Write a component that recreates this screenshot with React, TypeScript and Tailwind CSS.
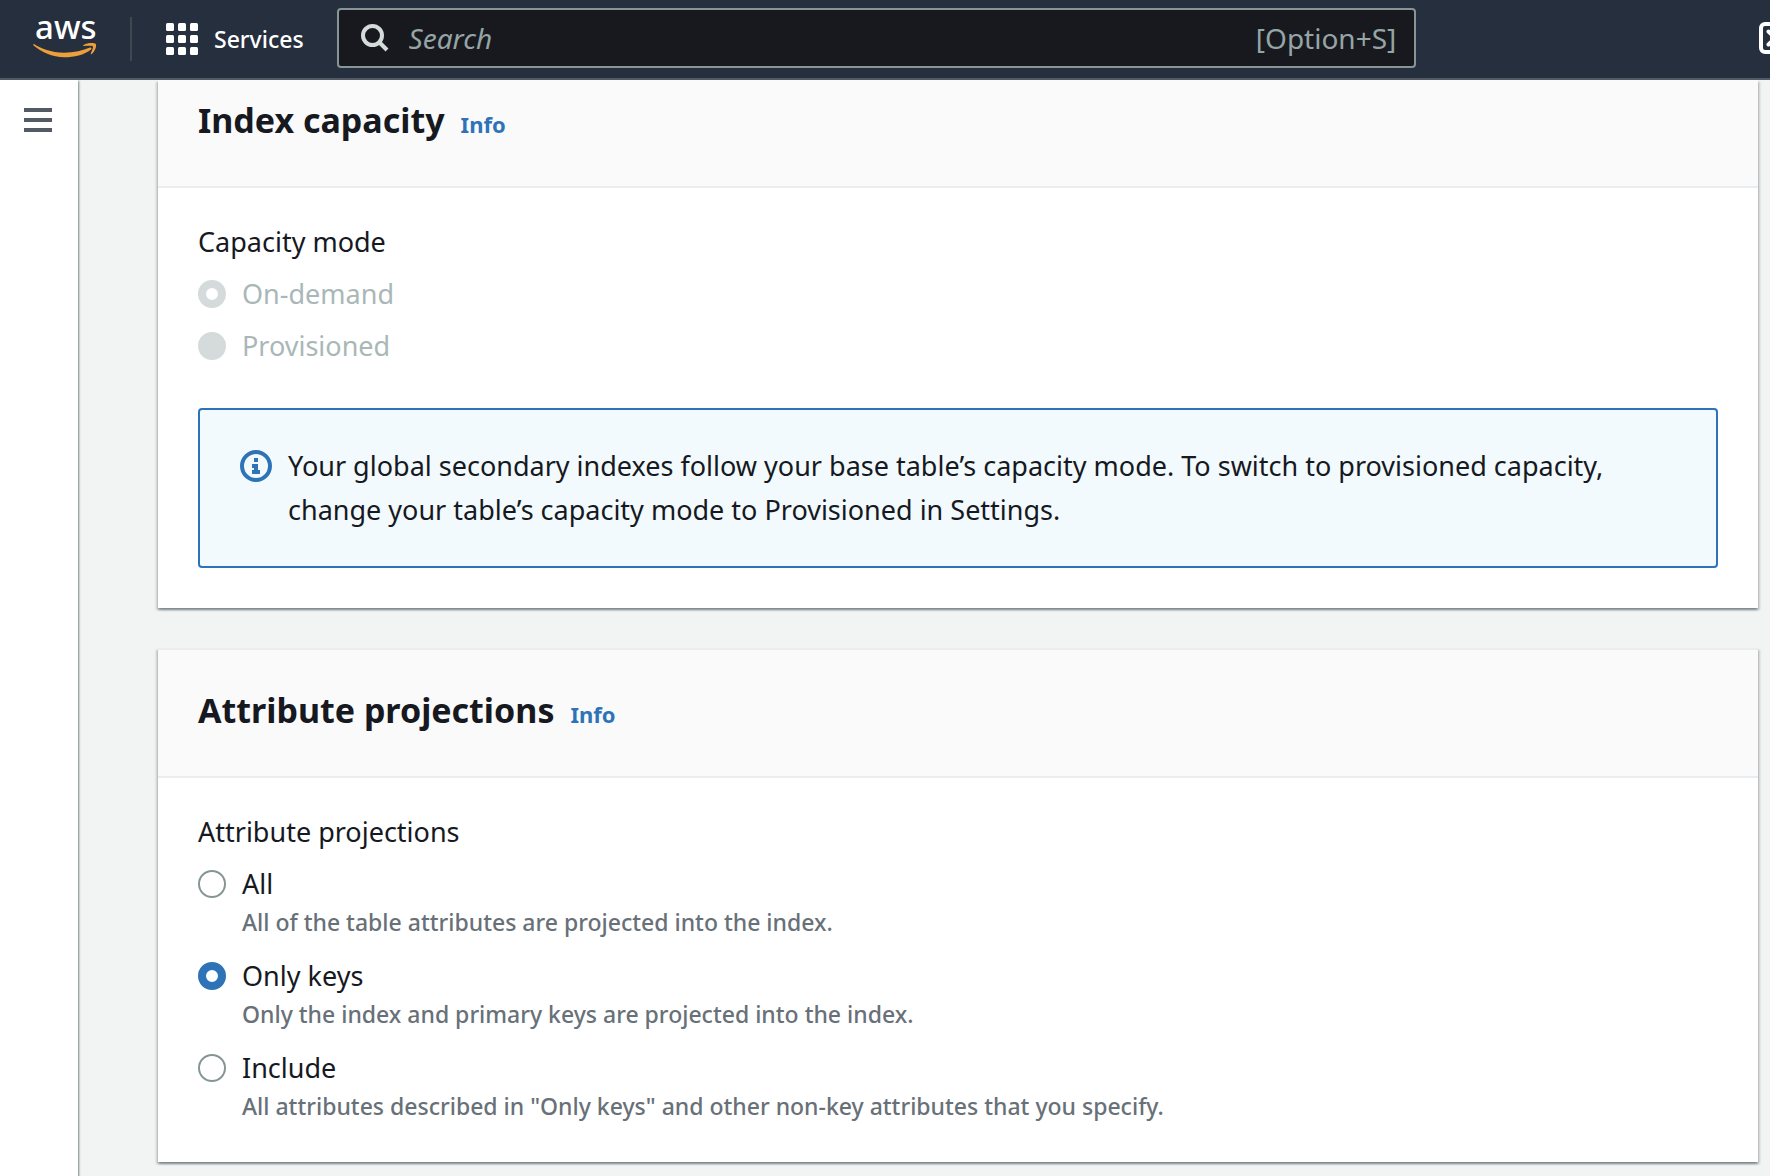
import { useState, type ReactNode } from "react";

function AwsLogo() {
  return (
    <svg viewBox="0 -14 64 78" className="h-[78px] w-16" role="img" aria-label="aws">
      <text x="2" y="25" fontSize="33" fontWeight="500" fill="#ffffff" fontFamily='"Noto Sans", sans-serif'>
        aws
      </text>
      <path
        d="M1 30C8 34.500 18 38.500 31 38.700C41 38.500 50 36.500 57 33.500C58.500 33 59 34.500 58 35.500C51 41 41 43.300 31.500 43.300C19.500 43 8 38 .600 31.500C0 30.800.300 29.800 1 30Z"
        fill="#ef9f3a"
      />
      <path
        d="M50.500 31.100C55 28.500 61 28.700 62.800 30C63.900 32 61.900 37.500 58.700 40C57.900 40.500 57.600 39.900 57.900 39.200C58.900 36.500 60.600 33.500 59.900 32.500C58.900 31.500 54 31.800 51 32.100C50.200 32.200 50 31.500 50.500 31.100Z"
        fill="#ef9f3a"
      />
    </svg>
  );
}

function GridIcon() {
  const cells = [0, 12, 24];
  return (
    <svg viewBox="0 0 32 32" className="size-8" fill="#ffffff" aria-hidden="true">
      {cells.map((y) => cells.map((x) => <rect key={`${x}-${y}`} x={x} y={y} width="8" height="8" rx="1.500" />))}
    </svg>
  );
}

function SearchIcon() {
  return (
    <svg viewBox="0 0 28 28" className="size-7 shrink-0" fill="none" stroke="#d5dbdb" strokeWidth="4" aria-hidden="true">
      <circle cx="11.500" cy="11.500" r="9.500" />
      <path d="M18 18L26 26" />
    </svg>
  );
}

function ShellIcon() {
  return (
    <svg viewBox="0 0 32 32" className="size-8" fill="none" stroke="#ffffff" strokeWidth="4" aria-hidden="true">
      <rect x="2" y="2" width="28" height="28" rx="4" />
      <path d="M9.500 9.500L16 16L9.500 22.500" strokeLinecap="round" />
    </svg>
  );
}

function InfoIcon() {
  return (
    <svg viewBox="0 0 32 32" className="size-8 shrink-0" fill="#2e73b8" aria-hidden="true">
      <circle cx="16" cy="16" r="14" fill="none" stroke="#2e73b8" strokeWidth="4" />
      <path d="M14 8h4v4h-4zM12 14h6v6h2v4h-8v-4h2v-2h-2z" />
    </svg>
  );
}

function Header() {
  return (
    <header className="flex h-20 items-center overflow-hidden border-b-2 border-[#545b64] bg-[#262f3e]">
      <a href="#home" className="ml-[33px] shrink-0">
        <AwsLogo />
      </a>
      <span className="ml-[33px] h-11 w-0.5 shrink-0 bg-[#414750]" />
      <button type="button" className="ml-[34px] flex shrink-0 items-center gap-4 text-[23px] font-medium text-white">
        <GridIcon />
        Services
      </button>
      <label className="mr-auto mb-0.5 ml-[33px] flex h-15 w-[61%] shrink-0 items-center gap-5 rounded-[4px] border-2 border-[#879596] bg-[#18191e] pr-[18px] pl-[22px]">
        <SearchIcon />
        <input
          type="search"
          placeholder="Search"
          aria-label="Search"
          className="min-w-0 flex-1 bg-transparent text-[28px] text-white italic outline-none placeholder:text-[#95a5a6]"
        />
        <span className="text-[28px] text-[#95a5a6]">[Option+S]</span>
      </label>
      <button type="button" aria-label="CloudShell" className="-mr-[21px] mb-0.5 shrink-0">
        <ShellIcon />
      </button>
    </header>
  );
}

function Panel({ title, scrolled, children }: { title: string; scrolled?: boolean; children: ReactNode }) {
  return (
    <section className="bg-white shadow-[0_2px_2px_0_rgba(0,28,36,0.3),2px_2px_2px_0_rgba(0,28,36,0.15),-2px_2px_2px_0_rgba(0,28,36,0.15)]">
      <div
        className={
          scrolled
            ? "flex items-baseline gap-4 border-b-2 border-[#eaeded] bg-[#fafafa] px-10 pt-4 pb-[42px]"
            : "flex items-baseline gap-4 border-y-2 border-[#eaeded] bg-[#fafafa] px-10 pt-9 pb-[42px]"
        }
      >
        <h2 className="text-[34px] leading-12 font-bold">{title}</h2>
        <a href="#info" className="text-[22px] leading-8 font-bold text-[#2e73b8]">
          Info
        </a>
      </div>
      {children}
    </section>
  );
}

const radio =
  "my-2 size-7 shrink-0 appearance-none rounded-full border-2 border-[#879596] bg-white checked:border-8 checked:border-[#2e73b8] disabled:border-[#d5dbdb] disabled:bg-[#d5dbdb] disabled:checked:bg-white";

function Option(props: {
  group: string;
  label: string;
  description?: string;
  checked: boolean;
  disabled?: boolean;
  onSelect?: () => void;
}) {
  return (
    <label className="flex gap-4">
      <input
        type="radio"
        name={props.group}
        checked={props.checked}
        disabled={props.disabled}
        onChange={() => props.onSelect?.()}
        className={radio}
      />
      <span className="flex flex-col">
        <span className={props.disabled ? "text-[#aab7b8]" : ""}>{props.label}</span>
        {props.description && (
          <span className="text-[23px] leading-8 font-medium text-[#687078]">{props.description}</span>
        )}
      </span>
    </label>
  );
}

const projections = [
  { label: "All", description: "All of the table attributes are projected into the index." },
  { label: "Only keys", description: "Only the index and primary keys are projected into the index." },
  { label: "Include", description: 'All attributes described in "Only keys" and other non-key attributes that you specify.' },
];

export default function App() {
  const [projection, setProjection] = useState("Only keys");
  return (
    <div className="flex min-h-screen flex-col bg-[#f2f3f3] font-['Noto_Sans',sans-serif] text-[27px] leading-[44px] font-normal text-[#16191f]">
      <Header />
      <div className="flex flex-1">
        <aside className="w-[78px] shrink-0 bg-white px-6 pt-7 shadow-[1px_1px_2px_0_rgba(0,28,36,0.5)]">
          <button type="button" aria-label="Open navigation" className="flex w-7 flex-col gap-1.5">
            <span className="h-1 w-full bg-[#545b64]" />
            <span className="h-1 w-full bg-[#545b64]" />
            <span className="h-1 w-full bg-[#545b64]" />
          </button>
        </aside>
        <main className="flex min-w-0 flex-1 flex-col gap-10 pr-3 pl-20">
          <Panel title="Index capacity" scrolled>
            <div className="flex flex-col gap-10 px-10 pt-8 pb-10">
              <fieldset className="flex flex-col gap-2">
                <legend className="mb-2">Capacity mode</legend>
                <Option group="capacity" label="On-demand" checked disabled />
                <Option group="capacity" label="Provisioned" checked={false} disabled />
              </fieldset>
              <div className="flex items-start gap-4 rounded-[4px] border-2 border-[#2e73b8] bg-[#f2fafd] px-10 py-[34px]">
                <span className="py-1.5">
                  <InfoIcon />
                </span>
                <p>
                  Your global secondary indexes follow your base table’s capacity mode. To switch to provisioned
                  capacity, change your table’s capacity mode to Provisioned in Settings.
                </p>
              </div>
            </div>
          </Panel>
          <Panel title="Attribute projections">
            <fieldset className="px-10 pt-8 pb-10">
              <legend className="contents">
                <span className="mb-2 block">Attribute projections</span>
              </legend>
              <div className="flex flex-col gap-4">
                {projections.map((p) => (
                  <Option
                    key={p.label}
                    group="projection"
                    label={p.label}
                    description={p.description}
                    checked={projection === p.label}
                    onSelect={() => setProjection(p.label)}
                  />
                ))}
              </div>
            </fieldset>
          </Panel>
        </main>
      </div>
    </div>
  );
}
